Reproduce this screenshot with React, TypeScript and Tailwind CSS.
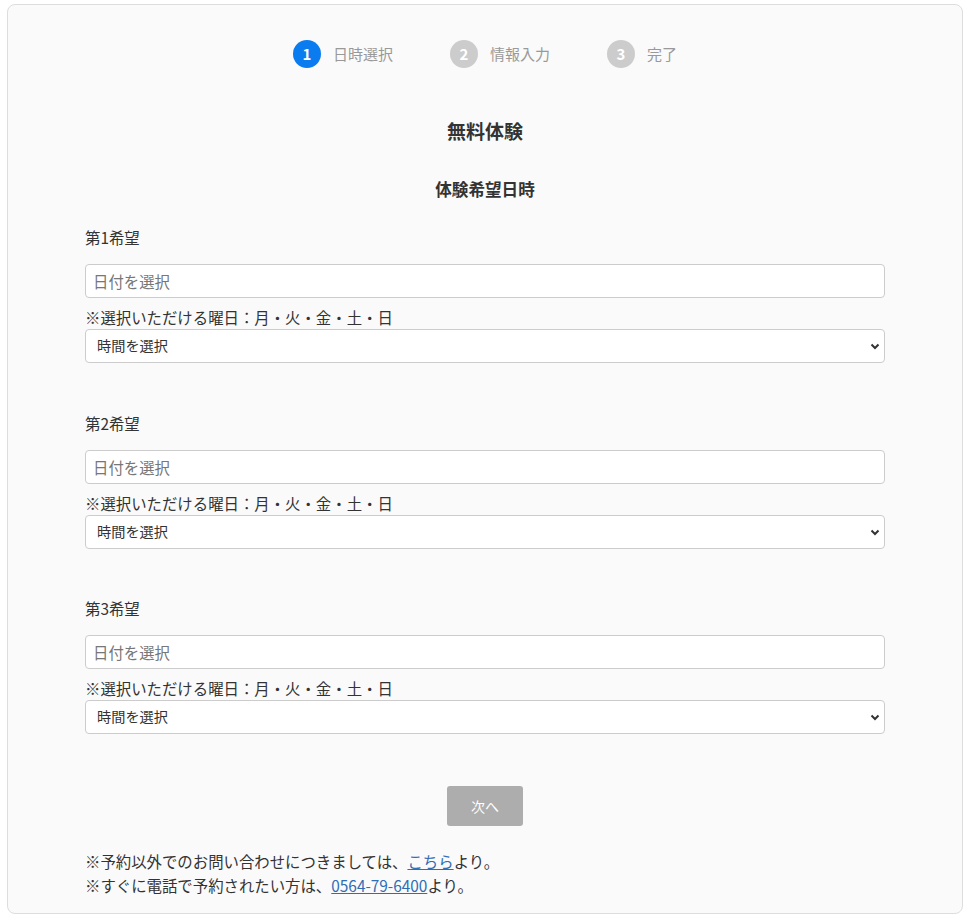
import React from 'react';

const steps = [
    { n: 1, label: '日時選択', active: true },
    { n: 2, label: '情報入力', active: false },
    { n: 3, label: '完了', active: false },
];

function Choice({ index, first }: { index: number; first?: boolean }) {
    return (
        <div className={first ? 'mt-[25px]' : 'mt-[48.5px]'}>
            <div className="text-[15.4px] leading-[22px] text-[#333]">第{index}希望</div>
            <input
                type="text"
                placeholder="日付を選択"
                className="mt-[16px] block w-full h-[34px] px-[7px] text-[15.4px] bg-white border border-[#ccc] rounded-[4px] text-[#333] placeholder:text-[#777] outline-none"
            />
            <div className="mt-[8px] text-[15.4px] leading-[22px] text-[#333]">※選択いただける曜日：月・火・金・土・日</div>
            <div className="relative mt-[1px]">
                <select className="block w-full h-[34px] pl-[11px] pr-8 text-[14.2px] bg-white border border-[#ccc] rounded-[4px] text-[#333] appearance-none outline-none">
                    <option>時間を選択</option>
                </select>
                <svg className="absolute right-[5px] top-[14px] w-[10px] h-[7px] pointer-events-none" viewBox="0 0 10 7">
                    <path d="M1.5 1.5 L5 5 L8.5 1.5" fill="none" stroke="#333" strokeWidth="2" />
                </svg>
            </div>
        </div>
    );
}

export default function App() {
    return (
        <div className="min-h-screen bg-white pt-[4px] pl-[7px]" style={{ fontFamily: '"Noto Sans CJK JP", "Noto Sans", sans-serif' }}>
            <div className="w-[956px] h-[910px] bg-[#fafafa] border border-[#ddd] rounded-[8px] pt-[35px]">
                <div className="flex justify-center gap-[57px]">
                    {steps.map((s) => (
                        <div key={s.n} className="flex items-center gap-[12px]">
                            <div className={`w-[28px] h-[28px] rounded-full flex items-center justify-center text-white text-[15px] font-bold ${s.active ? 'bg-[#0a7cf0]' : 'bg-[#cccccc]'}`}>
                                {s.n}
                            </div>
                            <div className="text-[15px] text-[#999]">{s.label}</div>
                        </div>
                    ))}
                </div>

                <h1 className="mt-[49px] text-center text-[19px] leading-[27px] font-bold text-[#333]">無料体験</h1>
                <h2 className="mt-[33px] text-center text-[16.6px] leading-[24px] font-bold text-[#333]">体験希望日時</h2>

                <div className="w-[800px] mx-auto">
                    <Choice index={1} first />
                    <Choice index={2} />
                    <Choice index={3} />

                    <div className="mt-[52px] flex justify-center">
                        <button className="w-[76px] h-[40px] rounded-[3px] bg-[#adadad] text-white text-[14px]">次へ</button>
                    </div>

                    <div className="mt-[23px] text-[15.4px] leading-[24px] text-[#333]">
                        <p>※予約以外でのお問い合わせにつきましては、<a href="#" className="text-[#2f6db5] underline">こちら</a>より。</p>
                        <p>※すぐに電話で予約されたい方は、<a href="#" className="text-[#2f6db5] underline">0564-79-6400</a>より。</p>
                    </div>
                </div>
            </div>
        </div>
    );
}
